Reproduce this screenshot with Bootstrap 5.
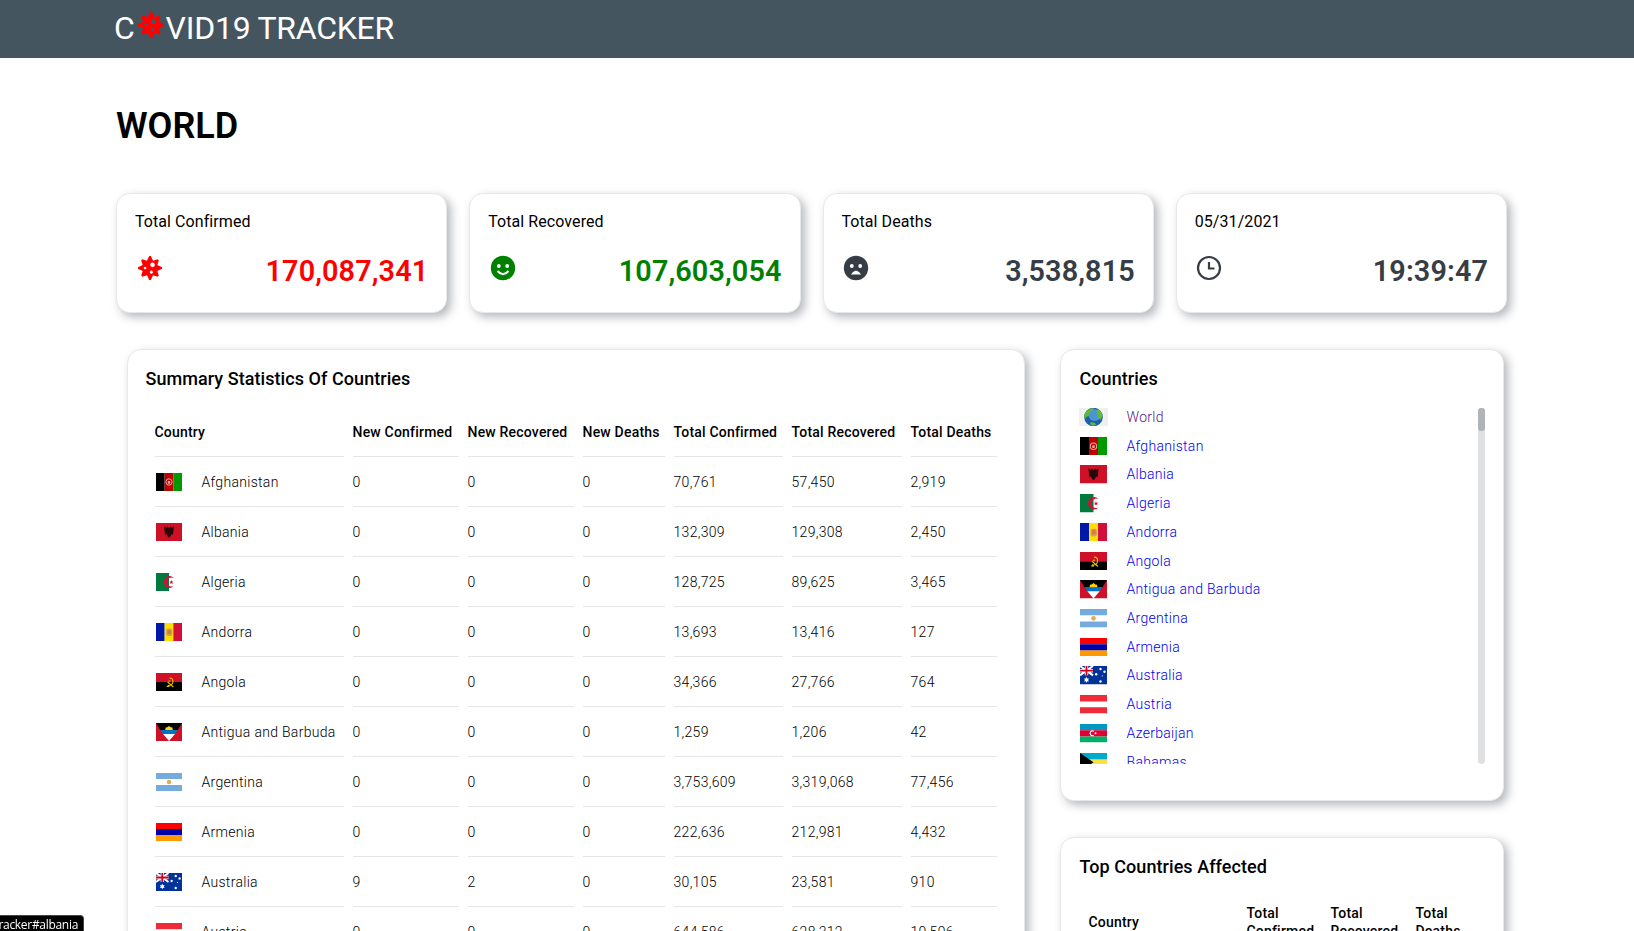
<!DOCTYPE html>
<html lang="en">
<head>
<meta charset="utf-8">
<title>Covid19 Tracker</title>
<meta name="viewport" content="width=device-width, initial-scale=1">
<link href="https://cdn.jsdelivr.net/npm/bootstrap@5.3.0/dist/css/bootstrap.min.css" rel="stylesheet">
<style>
html, body { height: 100%; overflow: hidden; }
body { font-family: Roboto, "Liberation Sans", sans-serif; color: #000; background: #fff; letter-spacing: .3px; }
.site-head { height: 58px; background: #455560; color: #fff; padding: 8px 0 0 114px; }
.brand { font-size: 32px; line-height: 40px; letter-spacing: -.25px; font-weight: 400; white-space: nowrap; }
.brand svg { width: 28px; height: 28px; margin: 3px 0 0 2px; fill: red; }
.brand .rest { margin-left: 1px; }
.world { font-size: 36px; line-height: 42px; font-weight: 600; letter-spacing: 0; margin: 0 0 46px; }
.wrap { margin-left: 116px; width: 1391px; padding-top: 47px; }
.tile { border: 1px solid #e6e8ea; border-radius: 14px; background: #fff; box-shadow: 4px 4px 10px rgba(60,65,75,.38); }
.stats { gap: 22px; }
.stat { height: 120px; padding: 18px 18px 0; flex: 1 1 0; }
.stat-name { font-size: 16px; line-height: 20px; letter-spacing: .07px; }
.stat-line { margin-top: 23px; }
.stat-val { font-size: 28.8px; line-height: 32px; font-weight: 600; letter-spacing: .1px; }
.stat svg { width: 28px; height: 28px; margin: -1px 0 0 .5px; }
.stat svg.virus { width: 26px; height: 26px; margin: 0 0 0 1.5px; }
.c-red { color: red; } .c-green { color: green; } .c-dark { color: #373d45; }
.panels { margin: 36px 0 0 11px; gap: 35px; }
.main-tile { width: 898px; height: 1200px; padding: 17px 18px 17px 17.500px; }
.side { width: 444px; }
.list-tile { height: 452px; padding: 17px 18px; }
.top-tile { height: 500px; margin-top: 36px; padding: 17px 18px; }
.tile-title { font-size: 18px; line-height: 24px; font-weight: 500; margin: 0; letter-spacing: .06px; }
.side .tile-title { padding-left: .5px; }
.stat-table { table-layout: fixed; border-collapse: separate; border-spacing: 9px 0; margin-top: 16px; font-size: 14px; line-height: 18px; width: 860px; }
.stat-table th { font-weight: 500; color: #000; white-space: nowrap; letter-spacing: .2px; }
.stat-table th, .stat-table td { height: 50px; padding: 0; border-bottom: 1px solid #e6e6e6; vertical-align: middle; }
.stat-table td { color: #000; font-weight: 300; }
.stat-table .flag { width: 26px; height: 18px; margin: 0 20px 0 1px; }
.clist { height: 356px; width: 406px; margin-top: 17px; overflow: hidden; }
.clist ul { line-height: 18px; font-size: 14px; width: 399px; font-weight: 300; }
.clist li { height: 28.72px; }
.clist a { color: #00e; text-decoration: none; }
.clist a.seen { color: #551a8b; }
.clist .flag { width: 27px; height: 18.6px; margin: 0 19.5px 0 1px; }
.clist .flag.globe { width: 29px; height: 18px; margin: 0 18.5px 0 0; }
.track { width: 7px; background: #dfe0e2; border-radius: 4px; }
.thumb { height: 23px; background: #b0b3b8; border-radius: 3px; }
.top-table { margin: 25px 0 0 9.500px; font-size: 14px; line-height: 18px; font-weight: 500; letter-spacing: .2px; }
.status { left: 0; bottom: 0; width: 84px; height: 16.5px; background: #000; color: #fff; border-radius: 0 4px 0 0; overflow: hidden; font: 12px/18px "Open Sans", sans-serif; letter-spacing: -.3px; padding: 0 5px 0 0; border-right: 1px solid #444; border-top: 1px solid #444; }
</style>
</head>
<body>
<svg class="d-none">
  <symbol id="virus" viewBox="0 0 28 28"><path fill-rule="evenodd" d="M13.100 1h1.800L17.300 6.100 22.100 4.500 23.500 5.900 21.900 10.700 27 13.100v1.800L21.900 17.300 23.500 22.100 22.100 23.500 17.300 21.900 14.900 27h-1.800L10.700 21.900 5.900 23.500 4.500 22.100 6.100 17.300 1 14.900v-1.800L6.100 10.700 4.500 5.900 5.900 4.500 10.700 6.100zM16.700 8.200a2.500 2.500 0 1 0 .01 0zM8.700 12.600a1.400 1.400 0 1 0 .01 0zM15.500 16.800a1.700 1.700 0 1 0 .01 0z"/></symbol>
  <symbol id="f-World" viewBox="0 0 29 18"><rect width="29" height="18" fill="#f0f0f0"/><circle cx="14.500" cy="9" r="9.300" fill="#1d5fa8"/><circle cx="15.500" cy="7" r="6" fill="#4a94d8"/><path d="M6 5q4-5 9-5l-2 3-2 1-1 4-3 1-1 2-1-2zM19 1q4 3 4.500 7l-2 4-3-3 .5-3-2-2zM12 14l4 1 1 2-3 1-3-2z" fill="#63b83a"/></symbol>
  <symbol id="f-Afghanistan" viewBox="0 0 27 18" preserveAspectRatio="none"><path d="M0 0h9v18H0z"/><path d="M9 0h9v18H9z" fill="#be0000"/><path d="M18 0h9v18h-9z" fill="#009900"/><circle cx="13.500" cy="9" r="3.200" fill="none" stroke="#e9a5a5"/><path d="M12.300 8h2.400v2.700h-2.400z" fill="#e9a5a5"/></symbol>
  <symbol id="f-Albania" viewBox="0 0 27 18" preserveAspectRatio="none"><path d="M0 0h27v18H0z" fill="#ce1126"/><path d="M8.500 3.500l2.300 1 1.200-1 1.500 1.500 1.500-1.500 1.200 1 2.300-1-.5 5.500-.5 3-1.500-1-.8 2-1.700 2-1.700-2-.8-2-1.500 1-.5-3z" fill="#2b0508"/></symbol>
  <symbol id="f-Algeria" viewBox="0 0 27 18" preserveAspectRatio="none"><path d="M0 0h27v18H0z" fill="#fff"/><path d="M0 0h13.500v18H0z" fill="#007a3d"/><path d="M18.500 5a6 6 0 1 0 0 8 4.600 4.600 0 1 1 0-8z" fill="#d21034"/><path d="M16 7l.6 1.400 1.600.1-1.200 1 .4 1.500-1.400-.8-1.400.8.4-1.500-1-1h1.400z" fill="#d21034"/></symbol>
  <symbol id="f-Andorra" viewBox="0 0 27 18" preserveAspectRatio="none"><path d="M0 0h9v18H0z" fill="#0018a8"/><path d="M9 0h9v18H9z" fill="#fedf00"/><path d="M18 0h9v18h-9z" fill="#d0103a"/><rect x="10.500" y="5.500" width="6.500" height="7.500" rx="2" fill="#d3a14d"/><path d="M12 7h3.500v4H12z" fill="#d67b3c"/></symbol>
  <symbol id="f-Angola" viewBox="0 0 27 18" preserveAspectRatio="none"><path d="M0 0h27v9H0z" fill="#ce1126"/><path d="M0 9h27v9H0z"/><path d="M14 5q4 0 3.500 4-.5 4-5.500 3.500M12 9l6 5M11 13.500h3M13 8h2" fill="none" stroke="#e8c400" stroke-width="1.100"/></symbol>
  <symbol id="f-Antigua" viewBox="0 0 27 18" preserveAspectRatio="none"><path d="M0 0h27v18H0z" fill="#ce1126"/><path d="M0 0h27L22.500 7H4.500z"/><path d="M4.800 7h17.400l-2.500 4H7.300z" fill="#0072c6"/><path d="M7.300 11h12.400l-6.200 7z" fill="#fff"/><path d="M9.500 7l.5-2.500 1.700-.2 1.800-1.300 1.800 1.300 1.700.2.500 2.500z" fill="#fcd116"/></symbol>
  <symbol id="f-Argentina" viewBox="0 0 27 18" preserveAspectRatio="none"><path d="M0 0h27v18H0z" fill="#74acdf"/><path d="M0 6h27v6H0z" fill="#fff"/><circle cx="13.500" cy="9" r="2.300" fill="#e9a94e"/></symbol>
  <symbol id="f-Armenia" viewBox="0 0 27 18" preserveAspectRatio="none"><path d="M0 0h27v6H0z" fill="red"/><path d="M0 6h27v6H0z" fill="#00a"/><path d="M0 12h27v6H0z" fill="#ff9900"/></symbol>
  <symbol id="f-Australia" viewBox="0 0 27 18" preserveAspectRatio="none"><path d="M0 0h27v18H0z" fill="#039"/><path d="M0 0l13 9M13 0L0 9" stroke="#fff" stroke-width="2"/><path d="M6.500 0v9M0 4.500h13" stroke="#fff" stroke-width="3.400"/><path d="M6.500 0v9M0 4.500h13" stroke="#d00018" stroke-width="1.800"/><path d="M6.500 10.500l.7 1.700 1.800-.2-1 1.500 1 1.500-1.800-.2-.7 1.700-.7-1.700-1.800.2 1-1.500-1-1.500 1.800.2z" fill="#fff"/><g fill="#fff"><circle cx="20.500" cy="3" r="1.200"/><circle cx="16.200" cy="8" r="1.200"/><circle cx="24.500" cy="5.500" r="1.200"/><circle cx="20.500" cy="15" r="1.200"/><circle cx="22.300" cy="9.500" r=".6"/></g></symbol>
  <symbol id="f-Austria" viewBox="0 0 27 18" preserveAspectRatio="none"><path d="M0 0h27v18H0z" fill="#ef2b3a"/><path d="M0 6.200h27v5.600H0z" fill="#fff"/></symbol>
  <symbol id="f-Azerbaijan" viewBox="0 0 27 18" preserveAspectRatio="none"><path d="M0 0h27v6H0z" fill="#0098c3"/><path d="M0 6h27v6H0z" fill="#e00034"/><path d="M0 12h27v6H0z" fill="#00ae65"/><path d="M13.700 7.100a2.300 2.300 0 1 0 0 3.800" fill="none" stroke="#fff" stroke-width="1.100"/><circle cx="15.500" cy="9" r="1" fill="#fff"/></symbol>
  <symbol id="f-Bahamas" viewBox="0 0 27 18" preserveAspectRatio="none"><path d="M0 0h27v18H0z" fill="#00abc9"/><path d="M0 6h27v6H0z" fill="#fae042"/><path d="M0 0l13.500 9L0 18z"/></symbol>
</svg>

<header class="site-head"><div class="brand d-flex"><span>C</span><svg><use href="#virus"/></svg><span class="rest">VID19 TRACKER</span></div></header>

<main class="wrap">
  <h1 class="world">WORLD</h1>
  <section class="stats d-flex">
    <div class="tile stat"><div class="stat-name">Total Confirmed</div>
      <div class="stat-line d-flex justify-content-between c-red"><svg class="virus" fill="currentColor"><use href="#virus"/></svg><div class="stat-val">170,087,341</div></div></div>
    <div class="tile stat"><div class="stat-name">Total Recovered</div>
      <div class="stat-line d-flex justify-content-between c-green"><svg viewBox="0 0 28 28"><circle cx="14" cy="14" r="12.200" fill="currentColor"/><g fill="#fff"><circle cx="9.800" cy="12" r="1.900"/><circle cx="18.200" cy="12" r="1.900"/></g><path d="M8.500 17q5.500 6.500 11 0" fill="none" stroke="#fff" stroke-width="2"/></svg><div class="stat-val">107,603,054</div></div></div>
    <div class="tile stat"><div class="stat-name">Total Deaths</div>
      <div class="stat-line d-flex justify-content-between c-dark"><svg viewBox="0 0 28 28"><circle cx="14" cy="14" r="12.200" fill="currentColor"/><g fill="#fff"><circle cx="9.800" cy="12" r="1.900"/><circle cx="18.200" cy="12" r="1.900"/><path d="M9 20.500q5-7.500 10 0z"/></g></svg><div class="stat-val">3,538,815</div></div></div>
    <div class="tile stat"><div class="stat-name">05/31/2021</div>
      <div class="stat-line d-flex justify-content-between c-dark"><svg viewBox="0 0 28 28" fill="none" stroke="currentColor" stroke-width="2.200"><circle cx="14" cy="14" r="11"/><path d="M14 8v6.500h5.500"/></svg><div class="stat-val">19:39:47</div></div></div>
  </section>

  <section class="panels d-flex align-items-start">
    <div class="tile main-tile flex-shrink-0">
      <h2 class="tile-title">Summary Statistics Of Countries</h2>
      <table class="stat-table">
        <colgroup><col style="width:189px"><col style="width:106px"><col style="width:106px"><col style="width:82px"><col style="width:109px"><col style="width:110px"><col style="width:86px"></colgroup>
        <thead><tr><th>Country</th><th>New Confirmed</th><th>New Recovered</th><th>New Deaths</th><th>Total Confirmed</th><th>Total Recovered</th><th>Total Deaths</th></tr></thead>
        <tbody id="rows"></tbody>
      </table>
    </div>
    <div class="side flex-shrink-0">
      <div class="tile list-tile">
        <h2 class="tile-title">Countries</h2>
        <div class="clist d-flex"><ul class="list-unstyled m-0" id="links"></ul><div class="track"><div class="thumb"></div></div></div>
      </div>
      <div class="tile top-tile">
        <h2 class="tile-title">Top Countries Affected</h2>
        <div class="top-table d-flex align-items-center"><div style="width:158px">Country</div><div style="width:84px">Total<br>Confirmed</div><div style="width:85px">Total<br>Recovered</div><div>Total<br>Deaths</div></div>
      </div>
    </div>
  </section>
</main>
<div class="status position-fixed d-flex justify-content-end">tracker#albania</div>

<script>
const flag = n => `<svg class="flag flex-shrink-0${n === 'World' ? ' globe' : ''}"><use href="#f-${n.split(' ')[0]}"/></svg>`;
const data = [
  ['Afghanistan', '0', '0', '0', '70,761', '57,450', '2,919'],
  ['Albania', '0', '0', '0', '132,309', '129,308', '2,450'],
  ['Algeria', '0', '0', '0', '128,725', '89,625', '3,465'],
  ['Andorra', '0', '0', '0', '13,693', '13,416', '127'],
  ['Angola', '0', '0', '0', '34,366', '27,766', '764'],
  ['Antigua and Barbuda', '0', '0', '0', '1,259', '1,206', '42'],
  ['Argentina', '0', '0', '0', '3,753,609', '3,319,068', '77,456'],
  ['Armenia', '0', '0', '0', '222,636', '212,981', '4,432'],
  ['Australia', '9', '2', '0', '30,105', '23,581', '910'],
  ['Austria', '0', '0', '0', '644,586', '628,312', '10,596']
];
document.getElementById('rows').innerHTML = data.map(r =>
  `<tr><td><div class="d-flex align-items-center text-nowrap">${flag(r[0])}${r[0]}</div></td>${r.slice(1).map(v => `<td>${v}</td>`).join('')}</tr>`).join('');
document.getElementById('links').innerHTML = ['World', ...data.map(r => r[0]), 'Azerbaijan', 'Bahamas'].map(n =>
  `<li class="d-flex align-items-start">${flag(n)}<a href="#"${n === 'World' ? ' class="seen"' : ''}>${n}</a></li>`).join('');
</script>
<script src="https://cdn.jsdelivr.net/npm/bootstrap@5.3.0/dist/js/bootstrap.bundle.min.js"></script>
</body>
</html>
